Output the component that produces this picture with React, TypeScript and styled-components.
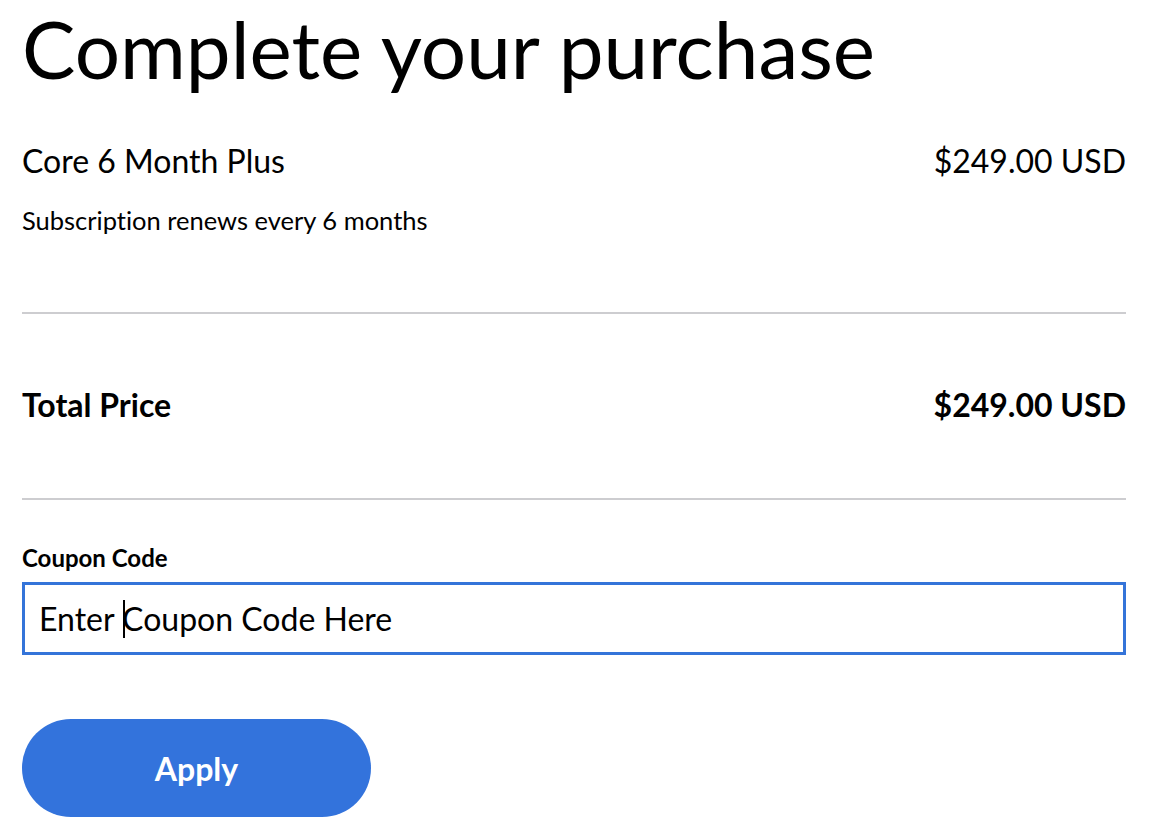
import React from "react";
import styled, { createGlobalStyle } from "styled-components";

const GlobalStyle = createGlobalStyle`
  html, body {
    margin: 0;
    padding: 0;
    background: #ffffff;
  }
  body {
    font-family: Lato, "Noto Sans", sans-serif;
    color: #000000;
    font-variant-ligatures: none;
  }
`;

const Page = styled.main`
  width: 1104px;
  margin-left: 22px;
  display: flex;
  flex-direction: column;
`;

const Title = styled.h1`
  margin: 0;
  font-size: 80px;
  font-weight: 400;
  line-height: 96px;
`;

const Row = styled.div<{ $top: number }>`
  display: flex;
  justify-content: space-between;
  align-items: baseline;
  margin-top: ${(p) => p.$top}px;
`;

const RowText = styled.span<{ $bold?: boolean }>`
  font-size: 32px;
  line-height: 38px;
  font-weight: ${(p) => (p.$bold ? 700 : 400)};
`;

const Note = styled.p`
  margin: 25px 0 0;
  font-size: 25.5px;
  line-height: 30px;
`;

const Divider = styled.hr<{ $top: number }>`
  margin: ${(p) => p.$top}px 0 0;
  border: 0;
  height: 2px;
  background: #cdcdd0;
`;

const Label = styled.label`
  display: block;
  margin-top: 43px;
  font-size: 24px;
  line-height: 29px;
  font-weight: 700;
`;

const Field = styled.div`
  position: relative;
  margin-top: 10px;
`;

const Input = styled.input`
  box-sizing: border-box;
  display: block;
  width: 100%;
  height: 73px;
  border: 3px solid #3474d9;
  border-radius: 0;
  padding: 0 14px;
  font-family: Lato, "Noto Sans", sans-serif;
  font-size: 32px;
  color: #000;
  caret-color: transparent;
  outline: none;
  background: #fff;
`;

const Caret = styled.span`
  position: absolute;
  left: 101px;
  top: 18px;
  width: 2px;
  height: 38px;
  background: #000;
  pointer-events: none;
`;

const Button = styled.button`
  margin-top: 64px;
  width: 349px;
  height: 98px;
  border: 0;
  border-radius: 49px;
  background: #3373dc;
  color: #ffffff;
  font-family: Lato, "Noto Sans", sans-serif;
  font-size: 32px;
  font-weight: 700;
  cursor: pointer;
`;

export default function App() {
  return (
    <>
      <GlobalStyle />
      <Page>
        <Title>Complete your purchase</Title>
        <Row $top={46}>
          <RowText>Core 6 Month Plus</RowText>
          <RowText>$249.00 USD</RowText>
        </Row>
        <Note>Subscription renews every 6 months</Note>
        <Divider $top={77} />
        <Row $top={72}>
          <RowText $bold>Total Price</RowText>
          <RowText $bold>$249.00 USD</RowText>
        </Row>
        <Divider $top={74} />
        <Label htmlFor="coupon">Coupon Code</Label>
        <Field>
          <Input id="coupon" defaultValue="Enter Coupon Code Here" />
          <Caret />
        </Field>
        <Button type="button">Apply</Button>
      </Page>
    </>
  );
}
